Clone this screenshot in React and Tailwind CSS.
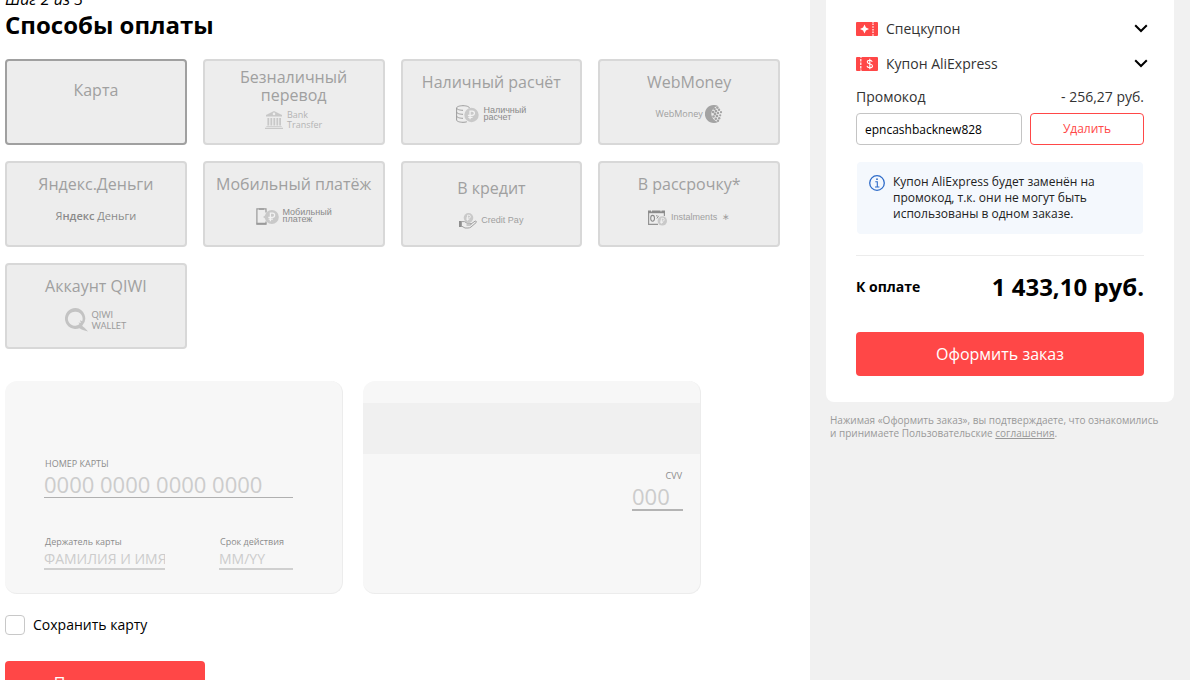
import React, { useState } from 'react';

const BankIcon = () => (
  <svg width="18" height="18" viewBox="0 0 18 18" fill="#c8c8c8">
    <path d="M9 0 1 4v1.6h16V4L9 0Zm0 1.6a1.3 1.3 0 1 1 0 2.6 1.3 1.3 0 0 1 0-2.6Z" fillRule="evenodd" />
    <path d="M2.4 7h1.8v7.5H2.4zM5.4 7h1.8v7.5H5.4zM8.4 7h1.8v7.5H8.4zM11.4 7h1.8v7.5h-1.8zM14.2 7H16v7.5h-1.8zM1.3 15.2h15.4v.9H1.3zM0 16.8h18V18H0z" />
  </svg>
);

const Ruble = ({ cx, cy, r }) => (
  <g>
    <circle cx={cx} cy={cy} r={r} fill="#c9c9c9" />
    <path
      d={`M${cx - r * 0.2} ${cy + r * 0.6}V${cy - r * 0.55}h${r * 0.3}a${r * 0.3} ${r * 0.3} 0 0 1 0 ${r * 0.6}h-${r * 0.6}M${cx - r * 0.45} ${cy + r * 0.32}h${r * 0.6}`}
      fill="none"
      stroke="#f2f2f2"
      strokeWidth={r * 0.18}
    />
  </g>
);

const CashIcon = () => (
  <svg width="23" height="18" viewBox="0 0 23 18">
    <g fill="none" stroke="#9c9c9c" strokeWidth="1">
      <path d="M.6 3C.6 1.700 3.500.7 7 .7s6.400 1 6.400 2.300M.6 3v12c0 1.300 3 2.300 6.400 2.300 1.500 0 2.800-.2 3.800-.5M.6 3c0 1.300 3 2.300 6.400 2.300M.6 7c0 1.300 3 2.300 6.400 2.300M.6 11c0 1.300 3 2.300 6.400 2.300" />
    </g>
    <Ruble cx={15.5} cy={10} r={7.2} />
  </svg>
);

const WebMoneyIcon = () => (
  <svg width="18" height="18" viewBox="0 0 18 18">
    <path d="M9 0a9 9 0 1 0 4 17C9 15.500 6.800 13 6.400 9.800 6 6.300 8 2.800 12.800.8A9 9 0 0 0 9 0Z" fill="#a3a3a3" />
    <g fill="#a3a3a3">
      <circle cx="9.500" cy="4" r="1.300" />
      <circle cx="12.300" cy="2.600" r="1.300" />
      <circle cx="8" cy="7" r="1.300" />
      <circle cx="11" cy="6" r="1.300" />
      <circle cx="14" cy="4.800" r="1.200" />
      <circle cx="10" cy="9" r="1.400" />
      <circle cx="13" cy="8" r="1.200" />
      <circle cx="16" cy="7.200" r="1.100" />
      <circle cx="8.500" cy="11.500" r="1.300" />
      <circle cx="12" cy="11" r="1.300" />
      <circle cx="15.200" cy="10.300" r="1.100" />
      <circle cx="10.800" cy="13.800" r="1.300" />
      <circle cx="14.200" cy="13.300" r="1.200" />
      <circle cx="13" cy="15.800" r="1.200" />
    </g>
  </svg>
);

const PhoneIcon = () => (
  <svg width="23" height="17" viewBox="0 0 23 17">
    <path d="M10 4.500V.9H.9v15.200H10v-2.500" fill="none" stroke="#9a9a9a" strokeWidth="1.200" />
    <path d="M.5 14.700h9.800v1.900H.5zM3 .5h5v1.300H3z" fill="#9a9a9a" />
    <path d="m7 9 3-2.300v4.600z" fill="#c9c9c9" />
    <Ruble cx={15.8} cy={9} r={7} />
  </svg>
);

const CreditIcon = () => (
  <svg width="18" height="16" viewBox="0 0 18 16">
    <Ruble cx={9.5} cy={4.8} r={4.8} />
    <path d="M0 8h2.800v6H0z" fill="#8e8e8e" />
    <path
      d="M3 8.600h2.500l2.500 1.600h3c1.500 0 1.500 1.800 0 1.800H7.500M12 11l4-2.800c1.300-.5 2 .7 1 1.500l-5 4.300c-.8.7-1.800 1-3 1H6L3 13.300"
      fill="none"
      stroke="#a0a0a0"
      strokeWidth="1"
    />
  </svg>
);

const CalendarIcon = () => (
  <svg width="19" height="16" viewBox="0 0 19 16">
    <path d="M.6 1v13.300H10M16.400 1v5" fill="none" stroke="#939393" strokeWidth="1.200" />
    <path d="M0 .5h17V3.200H0z" fill="#8b8b8b" />
    <path d="M3.500 0v1.500M13 0v1.500" stroke="#eee" strokeWidth="1" />
    <ellipse cx="4.600" cy="8.300" rx="1.900" ry="2.900" fill="none" stroke="#8b8b8b" strokeWidth="1.100" />
    <path d="M8 5.800h1.500M10.700 5.800 8.800 8.500" stroke="#8b8b8b" strokeWidth=".9" />
    <Ruble cx={14.3} cy={10.9} r={4.7} />
  </svg>
);

const QiwiIcon = () => (
  <svg width="24" height="24" viewBox="0 0 24 24">
    <path
      fillRule="evenodd"
      d="M10.500 0a10.500 10.500 0 1 0 4 20.200c2 1.300 4.700 2.300 8.500 3.400-1.400-2-3-3.500-4.800-4.800l-1-1A10.500 10.500 0 0 0 10.500 0Zm.2 3.800a7 7 0 0 1 6.500 9.400l-2.300-1 1 2.700-2.400-.4 1 1.500a7 7 0 1 1-3.800-12.200Z"
      fill="#c3c3c3"
    />
  </svg>
);

const StarTicketIcon = () => (
  <svg width="22" height="14" viewBox="0 0 22 14">
    <path d="M1 0h15l1 1 1-1h3a1 1 0 0 1 1 1v12a1 1 0 0 1-1 1h-3l-1-1-1 1H1a1 1 0 0 1-1-1V1a1 1 0 0 1 1-1Z" fill="#ff4747" />
    <path d="m8.500 2.500 1.400 3.100L13 7 9.900 8.400 8.500 11.500 7.100 8.400 4 7l3.100-1.400z" fill="#fff" />
    <path d="M17 1.500v11.500" stroke="#fff" strokeWidth="1.200" strokeDasharray="1.500 1.200" />
  </svg>
);

const DollarTicketIcon = () => (
  <svg width="22" height="14" viewBox="0 0 22 14">
    <path d="M1 0h3l1 1 1-1h15a1 1 0 0 1 1 1v12a1 1 0 0 1-1 1H6l-1-1-1 1H1a1 1 0 0 1-1-1V1a1 1 0 0 1 1-1Z" fill="#ff4747" />
    <path d="M4.800 2v11" stroke="#fff" strokeWidth="1.200" strokeDasharray="2.500 1" />
    <path d="M16.200 4.800c-.3-1-1.300-1.500-2.500-1.500s-2.400.6-2.400 1.800c0 2.500 5.200 1.200 5.200 3.800 0 1.200-1.200 1.900-2.700 1.900s-2.600-.7-2.800-1.900M13.800 1.800v10.400" fill="none" stroke="#fff" strokeWidth="1.100" />
  </svg>
);

const ChevronIcon = () => (
  <svg width="14" height="9" viewBox="0 0 14 9">
    <path d="m1.200 1.200 5.800 5.800 5.800-5.800" fill="none" stroke="#000" strokeWidth="2" />
  </svg>
);

const InfoIcon = () => (
  <svg width="16" height="16" viewBox="0 0 16 16" className="mt-px shrink-0">
    <circle cx="8" cy="8" r="7.300" fill="none" stroke="#2f6cc9" strokeWidth="1.300" />
    <path d="M6.300 6.800H8.300V12M6 12h4.400" fill="none" stroke="#2f6cc9" strokeWidth="1.100" />
    <circle cx="8" cy="4.200" r=".9" fill="#2f6cc9" />
  </svg>
);

const methods = [
  { id: 'card', title: 'Карта', pad: 'pt-5' },
  {
    id: 'bank',
    title: 'Безналичный перевод',
    pad: 'pt-[7px]',
    box: 'h-8 gap-1',
    logo: (
      <>
        <BankIcon />
        <span className="text-left text-[9px] leading-[10px] text-[#b4b4b4]">Bank<br />Transfer</span>
      </>
    ),
  },
  {
    id: 'cash',
    title: 'Наличный расчёт',
    pad: 'pt-3',
    box: 'h-[46px] gap-1',
    logo: (
      <>
        <CashIcon />
        <span className="text-left font-['Liberation_Sans',sans-serif] text-[9px] leading-[7px] text-[#8a8a8a]">Наличный<br />расчет</span>
      </>
    ),
  },
  {
    id: 'webmoney',
    title: 'WebMoney',
    pad: 'pt-3',
    box: 'h-[46px] gap-0.5',
    logo: (
      <>
        <span className="text-[9px] text-[#a0a0a0]">WebMoney</span>
        <WebMoneyIcon />
      </>
    ),
  },
  {
    id: 'yandex',
    title: 'Яндекс.Деньги',
    pad: 'pt-3',
    box: 'h-[46px]',
    logo: (
      <span className="text-[11px] text-[#8a8a8a]">
        Я<span className="font-semibold">ндекс</span> Деньги
      </span>
    ),
  },
  {
    id: 'mobile',
    title: 'Мобильный платёж',
    pad: 'pt-3',
    box: 'h-[46px] gap-1',
    logo: (
      <>
        <PhoneIcon />
        <span className="text-left font-['Liberation_Sans',sans-serif] text-[9px] leading-[7px] text-[#8a8a8a]">Мобильный<br />платеж</span>
      </>
    ),
  },
  {
    id: 'credit',
    title: 'В кредит',
    pad: 'pt-4',
    box: 'h-[50px] gap-1',
    logo: (
      <>
        <CreditIcon />
        <span className="font-['Liberation_Sans',sans-serif] text-[9px] text-[#a0a0a0]">Credit Pay</span>
      </>
    ),
  },
  {
    id: 'instalments',
    title: 'В рассрочку*',
    pad: 'pt-3',
    box: 'h-[50px] gap-1',
    logo: (
      <>
        <CalendarIcon />
        <span className="font-['Liberation_Sans',sans-serif] text-[9px] text-[#a0a0a0]">Instalments &nbsp;∗</span>
      </>
    ),
  },
  {
    id: 'qiwi',
    title: 'Аккаунт QIWI',
    pad: 'pt-3',
    box: 'h-[50px] gap-0.5',
    logo: (
      <>
        <QiwiIcon />
        <span className="text-left font-['Lato',sans-serif] text-[9px] leading-[11px] text-[#9c9c9c]">QIWI<br />WALLET</span>
      </>
    ),
  },
];

export default function Checkout() {
  const [method, setMethod] = useState('card');
  const [promo, setPromo] = useState('epncashbacknew828');
  const [saveCard, setSaveCard] = useState(false);

  return (
    <div className="flex h-screen overflow-hidden bg-white font-['Open_Sans',sans-serif] text-black">
      <main className="flex-1 pl-[5px] pr-[30px]">
        <p className="-mt-[13px] text-base leading-6 italic">Шаг 2 из 3</p>
        <h1 className="text-2xl leading-7 font-bold">Способы оплаты</h1>

        {/* Payment methods */}
        <div className="mt-5 grid grid-cols-4 gap-4">
          {methods.map((item) => (
            <button
              key={item.id}
              type="button"
              onClick={() => setMethod(item.id)}
              className={`flex h-[86px] flex-col items-center rounded-sm border-2 bg-[#ededed] ${item.pad} ${
                method === item.id ? 'border-[#a0a0a0]' : 'border-[#d8d8d8]'
              }`}
            >
              <span className={`text-base leading-[18px] text-[#a0a0a0] ${item.id === 'bank' ? 'w-32' : ''}`}>
                {item.title}
              </span>
              {item.logo && (
                <span className={`flex items-center justify-center ${item.box}`}>{item.logo}</span>
              )}
            </button>
          ))}
        </div>

        {/* Card form */}
        <form className="mt-8">
          <div className="flex gap-5">
            <div className="h-[213px] w-[338px] rounded-xl border-r border-b border-[#ececec] bg-[#f7f7f7] pt-[77px] pr-[49px] pl-[39px]">
              <label htmlFor="number" className="block pl-px text-[9px] leading-3 text-[#8c8c8c]">НОМЕР КАРТЫ</label>
              <input
                id="number"
                placeholder="0000 0000 0000 0000"
                className="block h-7 w-full border-b border-[#b0b0b0] bg-transparent pt-0.5 text-[22px] outline-none placeholder:text-[#ccc]"
              />
              <div className="mt-9 flex justify-between">
                <div className="w-[121px]">
                  <label htmlFor="holder" className="block pl-px text-[9px] leading-4 text-[#8c8c8c]">Держатель карты</label>
                  <input
                    id="holder"
                    placeholder="ФАМИЛИЯ И ИМЯ"
                    className="block h-5 w-full border-b-2 border-[#d0d0d0] bg-transparent text-sm outline-none placeholder:text-[#ccc]"
                  />
                </div>
                <div className="w-[74px]">
                  <label htmlFor="expiry" className="block pl-px text-[9px] leading-4 text-[#8c8c8c]">Срок действия</label>
                  <input
                    id="expiry"
                    placeholder="MM/YY"
                    className="block h-5 w-full border-b-2 border-[#d0d0d0] bg-transparent text-sm outline-none placeholder:text-[#ccc]"
                  />
                </div>
              </div>
            </div>

            <div className="h-[213px] w-[338px] rounded-xl border-r border-b border-[#ececec] bg-[#f7f7f7] pt-[22px]">
              <div className="h-[51px] bg-[#f0f0f0]" />
              <div className="mt-4 ml-auto mr-[17px] w-[51px]">
                <label htmlFor="cvv" className="block pr-px text-right text-[9px] leading-3 text-[#8c8c8c]">CVV</label>
                <input
                  id="cvv"
                  placeholder="000"
                  className="block h-[29px] w-full border-b-2 border-[#b4b4b4] bg-transparent pt-0.5 text-[22px] outline-none placeholder:text-[#ccc]"
                />
              </div>
            </div>
          </div>

          <label className="mt-[21px] flex h-5 items-center gap-2 text-sm">
            <input
              type="checkbox"
              checked={saveCard}
              onChange={(e) => setSaveCard(e.target.checked)}
              className="h-5 w-5 appearance-none rounded-sm border border-[#c8c8c8] bg-white checked:bg-[#ff4747]"
            />
            Сохранить карту
          </label>

          <button type="button" className="mt-[26px] h-11 w-[200px] rounded-sm bg-[#ff4747] text-base text-white">
            Подтвердить
          </button>
        </form>
      </main>

      <aside className="w-[380px] bg-[#f1f1f1] px-4">
        <div className="rounded-b-lg bg-white px-[30px] pt-[11px] pb-[26px]">
          <div className="-mr-1">
            <button type="button" className="flex h-[35px] w-full items-center text-left text-sm text-[#333]">
              <StarTicketIcon />
              <span className="flex-1 pl-2">Спецкупон</span>
              <ChevronIcon />
            </button>
            <button type="button" className="flex h-[35px] w-full items-center text-left text-sm text-[#333]">
              <DollarTicketIcon />
              <span className="flex-1 pl-2">Купон AliExpress</span>
              <ChevronIcon />
            </button>
          </div>

          <div className="flex h-8 items-center justify-between text-sm text-[#333]">
            <label htmlFor="promo">Промокод</label>
            <span>- 256,27 руб.</span>
          </div>
          <div className="flex gap-2">
            <input
              id="promo"
              value={promo}
              onChange={(e) => setPromo(e.target.value)}
              className="h-8 min-w-0 flex-1 rounded-sm border border-[#c4c4c4] px-2 text-xs outline-none"
            />
            <button
              type="button"
              onClick={() => setPromo('')}
              className="h-8 w-[114px] rounded-sm border border-[#ff4747] text-xs text-[#ff4747]"
            >
              Удалить
            </button>
          </div>

          <div className="mx-px mt-[17px] flex gap-2 rounded-sm bg-[#f4f8fd] px-3 py-3">
            <InfoIcon />
            <p className="pr-8 text-xs leading-4 text-[#222]">
              Купон AliExpress будет заменён на промокод, т.к. они не могут быть использованы в одном заказе.
            </p>
          </div>

          <div className="mt-[21px] flex items-center justify-between border-t border-[#ececec] pt-[15px]">
            <span className="text-sm font-bold">К оплате</span>
            <span className="text-2xl font-bold">1 433,10 руб.</span>
          </div>

          <button type="button" className="mt-[29px] h-11 w-full rounded-sm bg-[#ff4747] text-base text-white">
            Оформить заказ
          </button>
        </div>

        <p className="mt-3 px-1 text-[10px] leading-[13px] text-[#999]">
          Нажимая «Оформить заказ», вы подтверждаете, что ознакомились и&nbsp;принимаете Пользовательские{' '}
          <a href="#agreement" className="underline">соглашения</a>.
        </p>
      </aside>
    </div>
  );
}
